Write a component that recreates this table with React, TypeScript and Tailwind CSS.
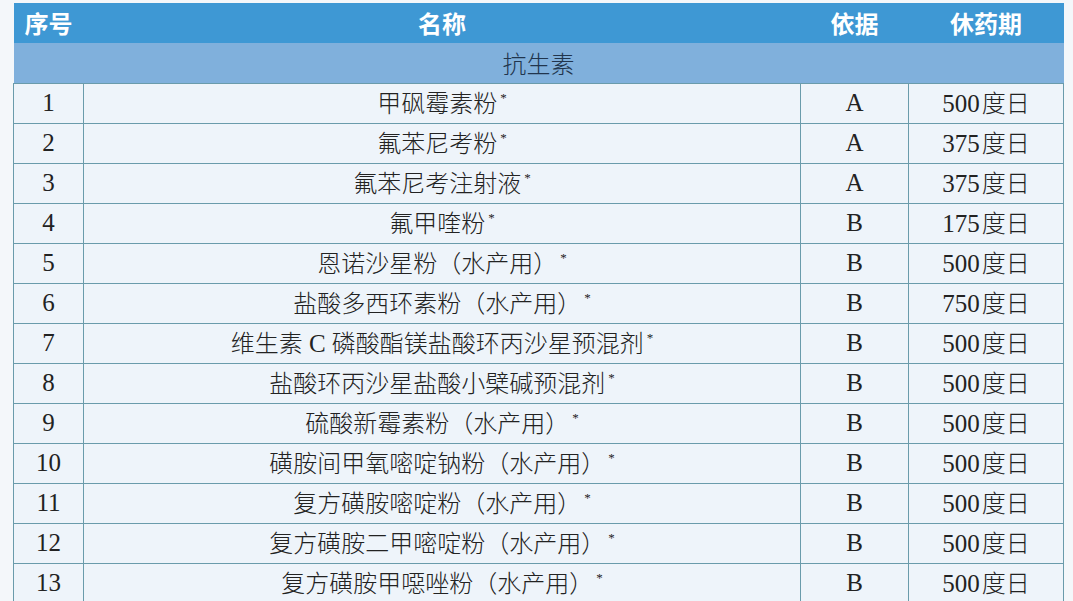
import React from 'react';

const rows: [string, string, string, string][] = [
  ['1', '甲砜霉素粉', 'A', '500'],
  ['2', '氟苯尼考粉', 'A', '375'],
  ['3', '氟苯尼考注射液', 'A', '375'],
  ['4', '氟甲喹粉', 'B', '175'],
  ['5', '恩诺沙星粉（水产用）', 'B', '500'],
  ['6', '盐酸多西环素粉（水产用）', 'B', '750'],
  ['7', '维生素 C 磷酸酯镁盐酸环丙沙星预混剂', 'B', '500'],
  ['8', '盐酸环丙沙星盐酸小檗碱预混剂', 'B', '500'],
  ['9', '硫酸新霉素粉（水产用）', 'B', '500'],
  ['10', '磺胺间甲氧嘧啶钠粉（水产用）', 'B', '500'],
  ['11', '复方磺胺嘧啶粉（水产用）', 'B', '500'],
  ['12', '复方磺胺二甲嘧啶粉（水产用）', 'B', '500'],
  ['13', '复方磺胺甲噁唑粉（水产用）', 'B', '500'],
];

const serif = { fontFamily: '"Liberation Serif", "Noto Sans CJK SC", serif' };
const cjk = { fontFamily: '"Noto Sans CJK SC", sans-serif' };

export default function App() {
  return (
    <div className="w-[1073px] h-[601px] overflow-hidden bg-[#f4f7fa] pt-[3px] pl-[13px]">
      <table className="border-collapse table-fixed w-[1050px]">
        <colgroup>
          <col className="w-[70px]" />
          <col className="w-[717px]" />
          <col className="w-[108px]" />
          <col className="w-[155px]" />
        </colgroup>
        <thead>
          <tr className="h-[40px] bg-[#3e98d4] text-white text-[24px]" style={cjk}>
            <th className="font-semibold">序号</th>
            <th className="font-semibold">名称</th>
            <th className="font-semibold">依据</th>
            <th className="font-semibold">休药期</th>
          </tr>
        </thead>
        <tbody>
          <tr className="h-[40px] bg-[#80b0dc]">
            <td colSpan={4} className="text-center text-[24px] text-[#21354d] font-light" style={cjk}>
              抗生素
            </td>
          </tr>
          {rows.map(([no, name, basis, days]) => (
            <tr key={no} className="h-[40px] bg-[#eef4fa] text-[#222] text-[25px]" style={serif}>
              <td className="border border-[#6a9bab] text-center">{no}</td>
              <td className="border border-[#6a9bab] text-center">
                <span style={cjk} className="font-light text-[24px]">
                  {name.split(' ').map((part, i) =>
                    part === 'C' ? (
                      <span key={i} style={serif} className="font-normal text-[25px]"> C </span>
                    ) : (
                      <span key={i}>{part}</span>
                    )
                  )}
                </span>
                <span className="relative -top-[10px] ml-[3px] text-[13px]">*</span>
              </td>
              <td className="border border-[#6a9bab] text-center">{basis}</td>
              <td className="border border-[#6a9bab] text-center">
                {days}
                <span className="font-light text-[24px] ml-[2px]" style={cjk}>度日</span>
              </td>
            </tr>
          ))}
        </tbody>
      </table>
    </div>
  );
}
